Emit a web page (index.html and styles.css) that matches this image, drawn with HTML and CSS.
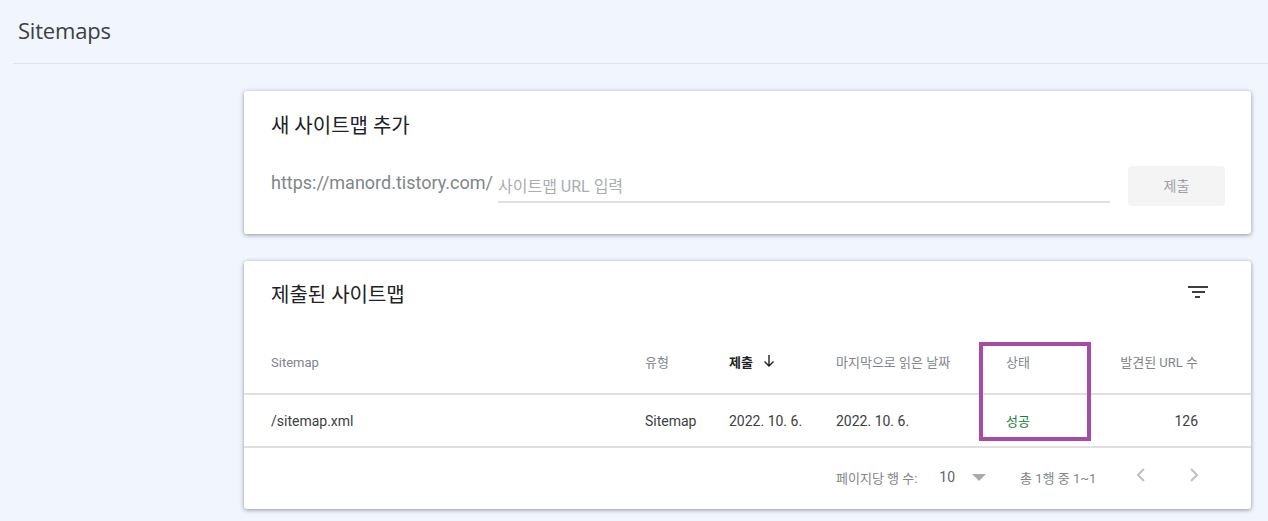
FILE: index.html
```html
<!DOCTYPE html>
<html lang="ko">
<head>
<meta charset="utf-8">
<title>Sitemaps</title>
<link rel="stylesheet" href="styles.css">
</head>
<body>
<header class="topbar"><h1 class="page-title">Sitemaps</h1></header>
<main class="content">
  <section class="card add-card">
    <h2 class="card-title">새 사이트맵 추가</h2>
    <div class="add-row">
      <span class="domain">https://manord.tistory.com/</span>
      <div class="url-input">사이트맵 URL 입력</div>
      <div class="submit-btn">제출</div>
    </div>
  </section>
  <section class="card list-card">
    <div class="list-head">
      <h2 class="card-title">제출된 사이트맵</h2>
      <svg class="filter-icon" width="24" height="24" viewBox="0 0 24 24"><path d="M2 6h20v2H2zM6 11h13v2H6zM9 16h5v2H9z" fill="#3c4043" transform="translate(0 -1)"/></svg>
    </div>
    <div class="row head-row">
      <div>Sitemap</div>
      <div>유형</div>
      <div class="sorted">제출<svg class="sort-icon" width="16" height="16" viewBox="0 0 16 16"><path d="M8 2v11M3.5 8.500 8 13l4.500-4.500" fill="none" stroke="#202124" stroke-width="1.400"/></svg></div>
      <div>마지막으로 읽은 날짜</div>
      <div>상태</div>
      <div class="num">발견된 URL 수</div>
    </div>
    <div class="row body-row">
      <div>/sitemap.xml</div>
      <div>Sitemap</div>
      <div>2022. 10. 6.</div>
      <div>2022. 10. 6.</div>
      <div class="ok">성공</div>
      <div class="num">126</div>
    </div>
    <div class="pager">
      <span class="pager-label">페이지당 행 수:</span>
      <span class="pager-value">10</span>
      <span class="caret"></span>
      <span class="pager-range">총 1행 중 1~1</span>
      <svg class="chev" width="16" height="16" viewBox="0 0 16 16"><path d="M11 2 5 8l6 6" fill="none" stroke="#bdc1c6" stroke-width="2"/></svg>
      <svg class="chev" width="16" height="16" viewBox="0 0 16 16"><path d="M5 2l6 6-6 6" fill="none" stroke="#bdc1c6" stroke-width="2"/></svg>
    </div>
    <div class="highlight"></div>
  </section>
</main>
</body>
</html>
```
FILE: styles.css
```css
* { box-sizing: border-box; }
html, body { margin: 0; height: 521px; overflow: hidden; }
body {
  background: #f1f5fd;
  font-family: Roboto, "Noto Sans CJK KR", sans-serif;
  color: #202124;
}
.topbar {
  height: 64px;
  margin-left: 13px;
  padding: 15px 0 0 5px;
  border-bottom: 1px solid #dfe3ea;
}
.page-title {
  margin: 0;
  font: 400 22px/30px "Open Sans", Roboto, sans-serif;
  letter-spacing: -0.2px;
  color: #3c4043;
}
.content {
  margin: 27px 17px 0 244px;
  display: flex;
  flex-direction: column;
  gap: 27px;
}
.card {
  position: relative;
  background: #fff;
  border-radius: 3px;
  box-shadow: 0 1px 4px rgba(60, 64, 67, .55);
}
.add-card { height: 143px; padding: 20px 26px 0 27px; }
.card-title {
  margin: 0;
  font-weight: 400;
  font-size: 20px;
  line-height: 30px;
  color: #202124;
}
.add-row {
  display: flex;
  align-items: flex-start;
  margin-top: 25px;
  height: 40px;
}
.domain {
  font-size: 18px;
  line-height: 24px;
  margin-top: 5px;
  color: #80868b;
  white-space: nowrap;
}
.url-input {
  flex: 1;
  margin-left: 5px;
  height: 37px;
  padding-top: 9px;
  font-size: 16px;
  line-height: 24px;
  color: #a9adb2;
  border-bottom: 2px solid #e0e0e0;
}
.submit-btn {
  width: 97px;
  height: 40px;
  margin-left: 18px;
  background: #f4f4f4;
  border-radius: 4px;
  font-size: 14px;
  line-height: 40px;
  text-align: center;
  color: #9aa0a6;
}
.list-card { height: 248px; }
.list-head {
  display: flex;
  justify-content: space-between;
  height: 82px;
  padding: 19px 41px 0 27px;
}
.filter-icon { margin-top: 1px; }
.row {
  display: grid;
  grid-template-columns: 401px 84px 107px 170px 112px 80px;
  padding-left: 0;
  align-items: center;
}
.row > div:first-child { padding-left: 27px; }
.head-row {
  height: 52px;
  font-size: 13px;
  color: #80868b;
  border-bottom: 2px solid #e0e0e0;
}
.head-row > div { padding-bottom: 11px; line-height: 20px; white-space: nowrap; }
.head-row .sorted { color: #202124; font-weight: 700; display: flex; align-items: center; }
.sort-icon { margin: 0 0 0 8px; position: relative; top: -2px; }
.body-row {
  height: 53px;
  font-size: 14px;
  color: #3c4043;
  border-bottom: 2px solid #e0e0e0;
}
.body-row > div { white-space: nowrap; }
.num { text-align: right; }
.head-row .num { direction: ltr; }
.ok { color: #188038; font-size: 13px; }
.pager {
  display: flex;
  align-items: center;
  height: 61px;
  padding: 0 26px 3px 592px;
  font-size: 13px;
  color: #80868b;
}
.pager-value { margin-left: 22px; font-size: 14px; color: #5f6368; }
.caret {
  margin-left: 17px;
  width: 0;
  height: 0;
  border: 7px solid transparent;
  border-top: 7px solid #a7abb0;
  border-bottom: 0;
}
.pager-range { margin-left: 34px; }
.chev { margin-left: 37px; position: relative; top: -2px; }
.pager-range + .chev { margin-left: 37px; }
.highlight {
  position: absolute;
  left: 735px;
  top: 81px;
  width: 112px;
  height: 99px;
  border: 4px solid #a64ca6;
}
```
